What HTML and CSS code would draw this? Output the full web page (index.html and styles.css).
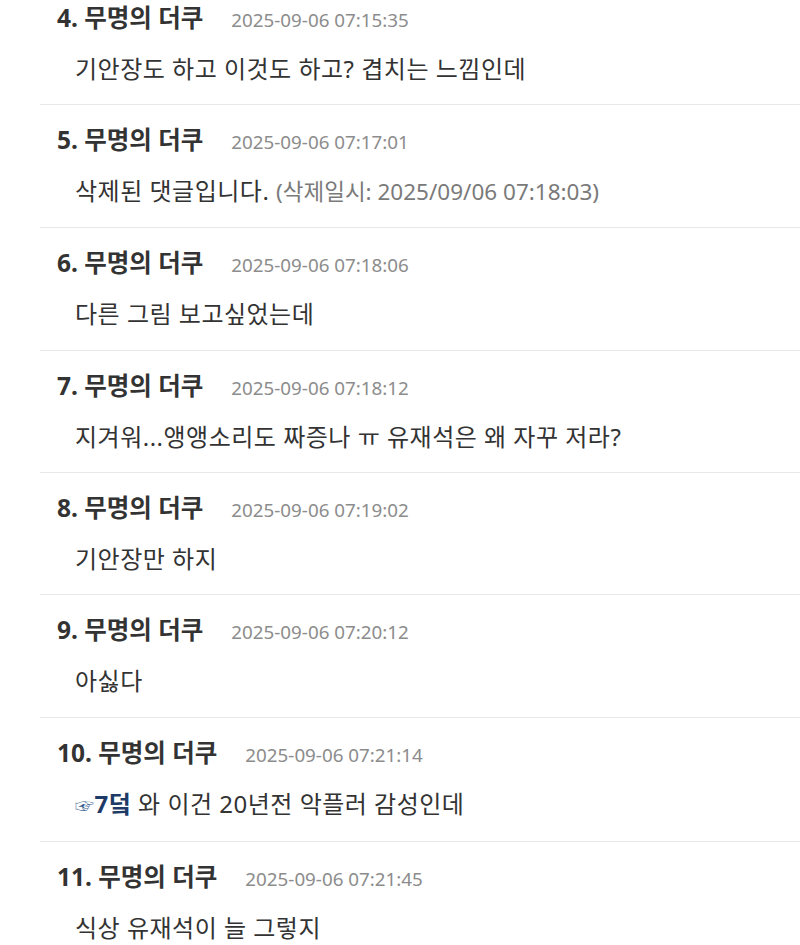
FILE: index.html
```html
<!DOCTYPE html>
<html lang="ko">
<head>
  <meta charset="UTF-8" />
  <meta name="viewport" content="width=device-width, initial-scale=1.0"/>
  <title>댓글</title>
  <link rel="stylesheet" href="styles.css">
</head>
<body>

  <ul class="comments">
    <li class="comment">
      <div class="meta"><span class="nick">4. 무명의 더쿠</span><span class="date">2025-09-06 07:15:35</span></div>
      <div class="text">기안장도 하고 이것도 하고? 겹치는 느낌인데</div>
    </li>
    <li class="comment">
      <div class="meta"><span class="nick">5. 무명의 더쿠</span><span class="date">2025-09-06 07:17:01</span></div>
      <div class="text">삭제된 댓글입니다. <span class="deleted">(삭제일시: 2025/09/06 07:18:03)</span></div>
    </li>
    <li class="comment">
      <div class="meta"><span class="nick">6. 무명의 더쿠</span><span class="date">2025-09-06 07:18:06</span></div>
      <div class="text">다른 그림 보고싶었는데</div>
    </li>
    <li class="comment">
      <div class="meta"><span class="nick">7. 무명의 더쿠</span><span class="date">2025-09-06 07:18:12</span></div>
      <div class="text">지겨워...앵앵소리도 짜증나 ㅠ 유재석은 왜 자꾸 저라?</div>
    </li>
    <li class="comment">
      <div class="meta"><span class="nick">8. 무명의 더쿠</span><span class="date">2025-09-06 07:19:02</span></div>
      <div class="text">기안장만 하지</div>
    </li>
    <li class="comment">
      <div class="meta"><span class="nick">9. 무명의 더쿠</span><span class="date">2025-09-06 07:20:12</span></div>
      <div class="text">아싫다</div>
    </li>
    <li class="comment">
      <div class="meta"><span class="nick">10. 무명의 더쿠</span><span class="date">2025-09-06 07:21:14</span></div>
      <div class="text"><a class="reply" href="#"><span class="hand">☞</span>7덬</a> 와 이건 20년전 악플러 감성인데</div>
    </li>
    <li class="comment">
      <div class="meta"><span class="nick">11. 무명의 더쿠</span><span class="date">2025-09-06 07:21:45</span></div>
      <div class="text">식상 유재석이 늘 그렇지</div>
    </li>
  </ul>

</body>
</html>
```

FILE: styles.css
```css
body {
  margin: 0;
  background: #fff;
  color: #333;
  font-family: "Noto Sans", "Noto Sans CJK KR", sans-serif;
  overflow: hidden;
}
.comments {
  list-style: none;
  margin: -17.5px 0 0 40px;
  padding: 0;
}
.comment {
  padding: 20px 0 20.4px 17px;
  border-bottom: 1px solid #e8e8e8;
}
.meta {
  display: flex;
  align-items: baseline;
  height: 30px;
  line-height: 30px;
}
.nick {
  font-size: 24.5px;
  font-weight: bold;
  color: #333;
}
.date {
  margin-left: 28px;
  font-size: 18.8px;
  color: #8c8c8c;
}
.text {
  margin-top: 21px;
  padding-left: 18px;
  line-height: 30px;
  font-size: 24px;
  letter-spacing: 0.5px;
  color: #333;
}
.deleted {
  color: #7a7a7a;
  font-size: 22.5px;
  letter-spacing: 0;
}
.reply {
  color: #1d3b66;
  font-weight: bold;
  text-decoration: none;
}
.hand {
  color: #3d5f92;
  font-weight: normal;
  font-size: 19px;
}
```
